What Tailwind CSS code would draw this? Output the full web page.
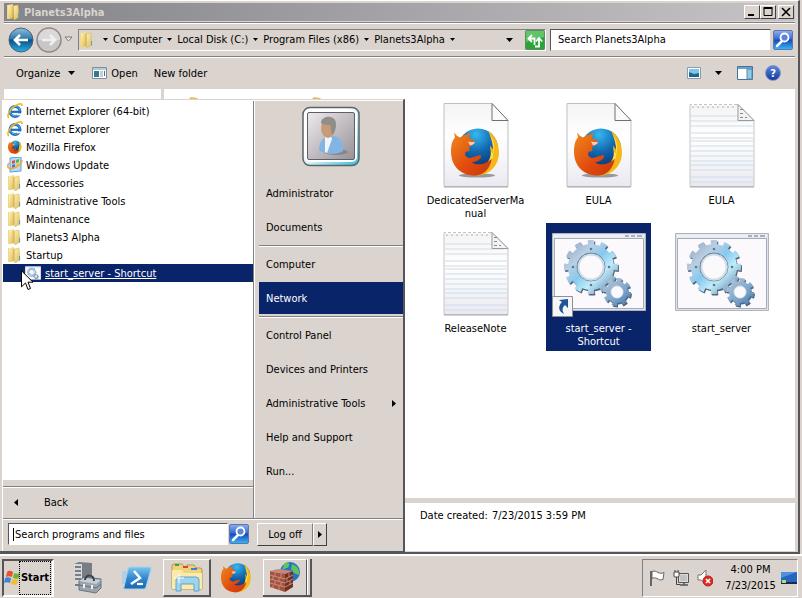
<!DOCTYPE html>
<html lang="en">
<head>
    <meta charset="UTF-8">
    <meta name="viewport" content="width=device-width, initial-scale=1.0">
    <title>Planets3Alpha</title>
    <script src="https://cdn.jsdelivr.net/npm/@tailwindcss/browser@4"></script>
</head>
<body class="relative flex flex-col h-screen overflow-hidden bg-[#dad3ce] text-black text-[11px] leading-[13px] font-['DejaVu_Sans_Condensed','Noto_Sans',sans-serif]">

    <!-- Shared icons -->
    <svg class="absolute w-0 h-0" aria-hidden="true">
        <defs>
            <linearGradient id="g-folder" x1="0" x2="1" y2="1"><stop offset="0" stop-color="#fff3b8"/><stop offset="1" stop-color="#dfb94e"/></linearGradient>
            <linearGradient id="g-fox" x1="0" x2="1" y2="1"><stop offset="0" stop-color="#f08a1c"/><stop offset="0.6" stop-color="#e0480e"/><stop offset="1" stop-color="#c8380c"/></linearGradient>
            <radialGradient id="g-globe" cx="0.45" cy="0.15" r="0.9"><stop offset="0" stop-color="#35b8f0"/><stop offset="0.5" stop-color="#1165ac"/><stop offset="1" stop-color="#0a2f6a"/></radialGradient>
            <linearGradient id="g-paper" x1="0" x2="0" y2="1"><stop offset="0" stop-color="#f4f4f4"/><stop offset="0.4" stop-color="#ffffff"/><stop offset="1" stop-color="#ebe9f0"/></linearGradient>
            <linearGradient id="g-gear" gradientUnits="userSpaceOnUse" x1="14" y1="10" x2="60" y2="58"><stop offset="0" stop-color="#8fa5bd"/><stop offset="0.3" stop-color="#b9cfe4"/><stop offset="0.5" stop-color="#86c9ee"/><stop offset="0.7" stop-color="#c0ecfa"/><stop offset="1" stop-color="#6689ab"/></linearGradient>
            <linearGradient id="g-gear2" gradientUnits="userSpaceOnUse" x1="54" y1="46" x2="76" y2="72"><stop offset="0" stop-color="#b5c4d6"/><stop offset="0.6" stop-color="#7ba6cc"/><stop offset="1" stop-color="#4a78ab"/></linearGradient>
            <linearGradient id="g-search" x1="0" x2="0" y2="1"><stop offset="0" stop-color="#8eb0ee"/><stop offset="0.45" stop-color="#3568d0"/><stop offset="0.5" stop-color="#1748bd"/><stop offset="1" stop-color="#3bb8f4"/></linearGradient>
        </defs>
        <symbol id="folder" viewBox="0 0 16 16">
            <path d="M1 1h6v13l-6 1z" fill="#efd888"/>
            <path d="M2 1l5-1v14l-5 1z" fill="url(#g-folder)"/>
            <path d="M7 2l5-1 1 12-5 3z" fill="url(#g-folder)" stroke="#d8b75a" stroke-width=".5"/>
            <path d="M7 2v13" stroke="#c9a548" stroke-width=".7"/>
            <path d="M12 9h1v4l-1 1z" fill="#4ba7d8"/>
        </symbol>
        <symbol id="ie" viewBox="0 0 16 16">
            <circle cx="8" cy="8.5" r="5" fill="none" stroke="#1b72c4" stroke-width="3"/>
            <circle cx="8" cy="8" r="5" fill="none" stroke="#4cb4ee" stroke-width="1"/>
            <path d="M4 8.800h10" stroke="#1c6fc0" stroke-width="2.200"/>
            <path d="M10 10.500h5.500v1.800H10z" fill="#fff"/>
            <path d="M2 15C-1 13 3 6 8 3s7-3 7 0" fill="none" stroke="#eeb41f" stroke-width="1.500"/>
        </symbol>
        <symbol id="firefox" viewBox="0 0 50 50">
            <circle cx="27" cy="22" r="20" fill="url(#g-globe)"/>
            <path d="M37 4c7 5 11 13 11 22 0 14-11 23-22 23l-4-5c10 1 18-5 18-15 0-4-1-7-1-10l3 4c0-7-2-12-5-19z" fill="#f6b71a"/>
            <path d="M39 8c5 8 5 15 3 20 0 10-8 15-14 15 8-5 12-10 12-18l2 2c1-7-1-13-3-19z" fill="#fde34b"/>
            <path d="M3 6c2 2 3 4 6 5 3-2 5-3 8-3l1-3c1 2 1 4 0 6 2 3 5 2 6 4 0 3-5 4-6 6 1 2 0 3 0 4-2-1-4 0-4 3 1 3 4 4 7 3 4-1 7-3 9-2 1 3-4 6-9 7 6 4 15 1 20-4-2 11-9 17-17 17C9 49 0 39 0 25 0 17 2 13 4 11z" fill="url(#g-fox)"/>
            <path d="M17 15c3 1 6 0 7 1-1 2-4 3-5 3z" fill="#f7cfae"/>
        </symbol>
        <symbol id="note" viewBox="0 0 66 86">
            <path d="M1 2h48l16 16v66H1z" fill="url(#g-paper)" stroke="#c5c5cb"/>
            <path d="M1 84.500h64" stroke="#a9a9b0"/>
            <path d="M3 2.500h45" stroke="#fff" stroke-width="3" stroke-dasharray="2 3"/>
            <path d="M3 4.500h45" stroke="#aaa" stroke-dasharray="2 3"/>
            <path d="M2 13.500h48M2 18.500h60M2 23.500h62M2 30.500h62M2 35.500h62M2 38.500h62M2 43.500h62M2 48.500h62M2 53.500h62M2 58.500h62M2 62.500h62M2 67.500h62M2 74.500h62M2 79.500h62" stroke="#cddde9"/>
            <path d="M49 2l16 16H49z" fill="#f3f3f3" stroke="#9a9a9e"/>
            <path d="M51 7h3M51 11h3M51 15h3M56 15h2" stroke="#888"/>
        </symbol>
        <symbol id="foxdoc" viewBox="0 0 66 86">
            <path d="M1 1h48l16 17v66H1z" fill="url(#g-paper)" stroke="#bfbfc4"/>
            <path d="M1 84.500h64" stroke="#aaa"/>
            <path d="M49 1l16 17H49z" fill="#fafafa" stroke="#707074"/>
            <ellipse cx="34" cy="73" rx="18" ry="2" fill="#999"/>
            <use href="#firefox" x="8" y="24" width="50" height="50"/>
        </symbol>
        <symbol id="gears" viewBox="0 0 94 78">
            <path d="M.5.500h93v77H.5z" fill="#dfe3ea" stroke="#aeb3bc"/>
            <path d="M2.500 5.500h89v70h-89z" fill="#fbf9fc" stroke="#a6acbc"/>
            <path d="M2 1.500h90v3H2z" fill="#eef0f4"/>
            <path d="M73 3h4M79 3h4M85 3h5" stroke="#aab2c0" stroke-width="2"/>
            <g fill="none" transform="translate(1 1.500)" stroke="#52677e">
                <circle cx="39" cy="34" r="18.500" stroke-width="9"/>
                <circle cx="39" cy="34" r="24" stroke-width="6" pathLength="24" stroke-dasharray="1 1" stroke-dashoffset=".5"/>
                <circle cx="65" cy="59" r="8.500" stroke-width="5"/>
                <circle cx="65" cy="59" r="12" stroke-width="4" pathLength="16" stroke-dasharray="1 1"/>
            </g>
            <g fill="none" stroke="url(#g-gear)">
                <circle cx="39" cy="34" r="18.500" stroke-width="9"/>
                <circle cx="39" cy="34" r="24" stroke-width="6" pathLength="24" stroke-dasharray="1 1" stroke-dashoffset=".5"/>
            </g>
            <circle cx="39" cy="34" r="14" fill="none" stroke="#71889f"/>
            <circle cx="39" cy="34" r="12.500" fill="#fbf9fc" stroke="#cfdbe6" stroke-width="2"/>
            <g fill="#5d7893"><circle cx="39" cy="16" r="1.300"/><circle cx="39" cy="52" r="1.300"/><circle cx="21" cy="34" r="1.300"/><circle cx="57" cy="34" r="1.300"/></g>
            <g fill="none" stroke="url(#g-gear2)">
                <circle cx="65" cy="59" r="8.500" stroke-width="5"/>
                <circle cx="65" cy="59" r="12" stroke-width="4" pathLength="16" stroke-dasharray="1 1"/>
            </g>
            <circle cx="65" cy="59" r="6" fill="#fbf9fc" stroke="#dce6ef"/>
        </symbol>
        <symbol id="search" viewBox="0 0 20 20">
            <rect x=".5" y=".5" width="19" height="19" rx="1.500" fill="url(#g-search)" stroke="#5a78ac"/>
            <path d="M9 11l-5 5" stroke="#fff" stroke-width="2.500" stroke-linecap="round"/>
            <circle cx="11.500" cy="7.500" r="4" fill="#5c86dd" stroke="#fff" stroke-width="1.800"/>
        </symbol>
        <symbol id="down" viewBox="0 0 7 4"><path d="M0 0h7L3.500 4z"/></symbol>
    </svg>

    <!-- Explorer window -->
    <main class="flex-1 min-h-0 flex flex-col pt-[2px] pl-1 pr-[3px] mr-[2px] border-t border-t-white border-r-2 border-r-[#55555a] border-b-2 border-b-[#55555a]">
        <header class="h-[18px] shrink-0 flex items-center pl-[2px] pr-px bg-linear-to-r from-[#858488] to-[#c6c4c7]">
            <svg class="size-4"><use href="#folder"/></svg>
            <h1 class="ml-[2px] flex-1 font-bold text-[#dad3ce]">Planets3Alpha</h1>
            <button aria-label="Minimize" class="w-4 h-[14px] bg-[#dad3ce] border border-t-white border-l-white border-r-[#404040] border-b-[#404040] flex justify-center">
                <svg class="w-3 h-3" viewBox="0 0 12 12"><path d="M2 8h6v2H2z"/></svg>
            </button>
            <button aria-label="Maximize" class="w-4 h-[14px] bg-[#dad3ce] border border-t-white border-l-white border-r-[#404040] border-b-[#404040] flex justify-center">
                <svg class="w-3 h-3" viewBox="0 0 12 12"><path d="M2 2.500h8v7H2z" fill="none" stroke="#000"/><path d="M1.500 1h9v2h-9z"/></svg>
            </button>
            <button aria-label="Close" class="ml-[2px] w-4 h-[14px] bg-[#dad3ce] border border-t-white border-l-white border-r-[#404040] border-b-[#404040] flex justify-center">
                <svg class="w-3 h-3" viewBox="0 0 12 12"><path d="M2 2l8 8M10 2l-8 8" stroke="#000" stroke-width="1.600"/></svg>
            </button>
        </header>

        <!-- Address bar -->
        <nav class="h-[35px] mt-[1px] shrink-0 flex items-center gap-1 pl-1 border-t border-t-[#808080] border-b border-b-[#808080] shadow-[inset_0_1px_0_#fff,0_1px_0_#fff]">
            <div class="w-[66px] flex items-center">
                <button aria-label="Back"><svg class="size-[26px]" viewBox="0 0 26 26">
                    <defs><linearGradient id="g-back" x1="0" x2="0" y2="1"><stop offset="0" stop-color="#91bdd9"/><stop offset=".45" stop-color="#2e79ac"/><stop offset=".5" stop-color="#0c4f85"/><stop offset="1" stop-color="#29b0e8"/></linearGradient></defs>
                    <circle cx="13" cy="13" r="12" fill="url(#g-back)" stroke="#47637c"/>
                    <path d="M7 13h13M12 8l-5 5 5 5" stroke="#fff" stroke-width="2.600" fill="none"/>
                </svg></button>
                <button aria-label="Forward" class="ml-[2px]"><svg class="size-[26px]" viewBox="0 0 26 26">
                    <circle cx="13" cy="13" r="12" fill="#c9c6c6" stroke="#8c8a8c" stroke-width="1.500"/>
                    <path d="M2 13a11 11 0 0 1 22 0z" fill="#dad8d8"/>
                    <path d="M6 13h13M14 8l5 5-5 5" stroke="#f1efef" stroke-width="2.600" fill="none"/>
                </svg></button>
                <button aria-label="Recent pages" class="ml-[2px]"><svg class="w-[9px] h-[7px]" viewBox="0 0 9 7"><path d="M1 1h7L4.500 5z" fill="#eee" stroke="#777"/></svg></button>
            </div>
            <div class="flex-1 h-[22px] flex items-center border border-t-[#808080] border-l-[#808080] border-r-white border-b-white">
                <svg class="size-4 shrink-0"><use href="#folder"/></svg>
                <svg class="w-[5px] h-[3px] ml-2 mr-[5px]"><use href="#down"/></svg>
                <a href="#" class="whitespace-nowrap">Computer</a>
                <svg class="w-[5px] h-[3px] mx-[5px]"><use href="#down"/></svg>
                <a href="#" class="whitespace-nowrap">Local Disk (C:)</a>
                <svg class="w-[5px] h-[3px] mx-[5px]"><use href="#down"/></svg>
                <a href="#" class="whitespace-nowrap">Program Files (x86)</a>
                <svg class="w-[5px] h-[3px] mx-[5px]"><use href="#down"/></svg>
                <a href="#" class="whitespace-nowrap">Planets3Alpha</a>
                <svg class="w-[5px] h-[3px] mx-[5px]"><use href="#down"/></svg>
                <button aria-label="Previous locations" class="ml-auto mr-3"><svg class="w-[7px] h-1"><use href="#down"/></svg></button>
                <button aria-label="Refresh"><svg class="size-5" viewBox="0 0 20 20">
                    <rect x=".5" y=".5" width="19" height="19" rx="1" fill="#2ba336" stroke="#5b8d62"/>
                    <path d="M1 1h18v6L1 12z" fill="#61c467"/>
                    <path d="M9.500 15V8.500H4M7 5L3.500 8.500 7 12" fill="none" stroke="#fff" stroke-width="1.800"/>
                    <path d="M10 16.500h4V9M10.800 11.500L14 8l3.200 3.500" fill="none" stroke="#fff" stroke-width="1.800"/>
                </svg></button>
            </div>
            <div class="flex items-center gap-[2px] pr-[2px]">
                <input type="text" aria-label="Search Planets3Alpha" value="Search Planets3Alpha" class="w-[221px] h-[22px] px-[7px] bg-white outline-none border border-t-[#55555a] border-l-[#55555a] border-r-[#dad3ce] border-b-[#dad3ce]">
                <button aria-label="Search"><svg class="size-5"><use href="#search"/></svg></button>
            </div>
        </nav>

        <!-- Command bar -->
        <div class="h-8 shrink-0 flex items-center pl-3 pr-[14px]">
            <button class="flex items-center gap-2">Organize <svg class="w-[7px] h-1"><use href="#down"/></svg></button>
            <button class="ml-[17px] flex items-center gap-1">
                <svg class="w-[15px] h-3" viewBox="0 0 15 12"><path d="M.5.500h14v11H.5z" fill="#fff" stroke="#7d8ea5"/><path d="M1 1h13v2H1z" fill="#b8c7da"/><path d="M2 4h5v6H2z" fill="#2f7d8c"/><path d="M8 5h3M8 7h3M8 9h3" stroke="#999"/><path d="M12 4h1v5h-1z" fill="#3f6fb4"/></svg>
                Open
            </button>
            <button class="ml-4">New folder</button>
            <button aria-label="Change your view" class="ml-auto flex items-center gap-[14px]">
                <svg class="w-[14px] h-3" viewBox="0 0 14 12"><path d="M.5.500h13v11H.5z" fill="#fff" stroke="#8a9bb5"/><path d="M2 2h10v8H2z" fill="#7cc4ee"/><path d="M2 5l5 2 5-1v4H2z" fill="#1f6f78"/><path d="M2 8l10 1v1H2z" fill="#2458a4"/></svg>
                <svg class="w-[7px] h-1"><use href="#down"/></svg>
            </button>
            <button aria-label="Show the preview pane" class="ml-[15px]"><svg class="w-4 h-[14px]" viewBox="0 0 16 14"><path d="M.5.500h15v13H.5z" fill="#fff" stroke="#45719d"/><path d="M1 1h14v2H1z" fill="#6da1cc"/><path d="M10 3h5v10h-5z" fill="#8fcbe8" stroke="#5a87b0"/></svg></button>
            <button aria-label="Help" class="ml-3 size-4 rounded-full bg-linear-to-b from-[#5c86d8] to-[#1638a0] border border-[#8295c4] text-white font-bold flex items-center justify-center">?</button>
        </div>

        <div class="flex-1 min-h-0 flex flex-col gap-[5px] mb-px">
            <div class="flex-1 min-h-0 flex gap-[3px]">
                <aside class="w-[157px] bg-white"></aside>
                <section class="flex-1 bg-white pt-[6px] pl-[13px] grid grid-cols-[repeat(auto-fill,105px)] auto-rows-[128px] gap-x-[18px] content-start text-center">
                    <svg class="w-full h-24" viewBox="0 0 105 96"><path d="M12 4l2-2 6 1 2 2v80l-10 8z" fill="#e9bb55"/></svg>
                    <svg class="w-full h-24" viewBox="0 0 105 96"><path d="M12 4l2-2 6 1 2 2v80l-10 8z" fill="#e9bb55"/></svg>
                    <div class="flex flex-col items-center pt-[7px] gap-[5px]">
                        <svg class="w-[66px] h-[87px]"><use href="#foxdoc"/></svg>
                        <span>DedicatedServerMa<br>nual</span>
                    </div>
                    <div class="flex flex-col items-center pt-[7px] gap-[5px]">
                        <svg class="w-[66px] h-[87px]"><use href="#foxdoc"/></svg>
                        <span>EULA</span>
                    </div>
                    <div class="flex flex-col items-center pt-[7px] gap-[5px]">
                        <svg class="w-[66px] h-[87px]"><use href="#note"/></svg>
                        <span>EULA</span>
                    </div>
                    <div class="col-start-3 flex flex-col items-center pt-[7px] gap-[5px]">
                        <svg class="w-[66px] h-[87px]"><use href="#note"/></svg>
                        <span>ReleaseNote</span>
                    </div>
                    <div class="flex flex-col items-center pt-[7px] gap-[5px] bg-[#0a246a] text-white">
                        <div class="relative h-[87px] pt-[3px]">
                            <svg class="w-[94px] h-[78px]"><use href="#gears"/></svg>
                            <svg class="absolute left-0 bottom-0 size-[21px]" viewBox="0 0 21 21"><path d="M.5.500h20v20H.5z" fill="#f5f5f8" stroke="#8d909b"/><path d="M7 4l9-1v9l-3-3c-3 3-3 5-1 9-6-3-6-8-2-12z" fill="#1f5496"/></svg>
                        </div>
                        <span>start_server -<br>Shortcut</span>
                    </div>
                    <div class="flex flex-col items-center pt-[7px] gap-[5px]">
                        <div class="h-[87px] pt-[3px]"><svg class="w-[94px] h-[78px]"><use href="#gears"/></svg></div>
                        <span>start_server</span>
                    </div>
                </section>
            </div>
            <footer class="h-12 shrink-0 bg-white pl-[416px] pt-[6px]">Date created: <span class="ml-px">7/23/2015 3:59 PM</span></footer>
        </div>
    </main>

    <!-- Start menu -->
    <div class="absolute left-0 bottom-[45px] w-[405px] bg-[#dad3ce] border-t border-t-[#dad3ce] border-r-2 border-r-[#55555a] border-b-2 border-b-[#55555a]">
        <div class="ml-[2px] border-t border-l border-white">
            <div class="flex border-b border-[#808080]">
                <div class="w-[251px] flex flex-col border-r border-[#808080]">
                    <ul class="flex-1 bg-white pt-px">
                        <li class="h-[18px] flex items-center pl-1 gap-[3px]"><svg class="size-4"><use href="#ie"/></svg><a href="#">Internet Explorer (64-bit)</a></li>
                        <li class="h-[18px] flex items-center pl-1 gap-[3px]"><svg class="size-4"><use href="#ie"/></svg><a href="#">Internet Explorer</a></li>
                        <li class="h-[18px] flex items-center pl-1 gap-[3px]"><svg class="w-4 h-[14px]"><use href="#firefox"/></svg><a href="#">Mozilla Firefox</a></li>
                        <li class="h-[18px] flex items-center pl-1 gap-[3px]"><svg class="size-4" viewBox="0 0 16 16"><path d="M3 1l11-1v14l-11 1z" fill="#b7dcf2" stroke="#5f9fd0"/><path d="M5 4l3-1v3l-3 1z" fill="#e8502e"/><path d="M9 3l3-1v3l-3 1z" fill="#55b948"/><path d="M5 8l3-1v3l-3 1z" fill="#2f7fd6"/><path d="M9 7l3-1v3l-3 1z" fill="#f4c430"/><path d="M2 6c-3 4 0 7 5 5s8-5 8-8" fill="none" stroke="#f0a63c" stroke-width="1.500"/></svg><a href="#">Windows Update</a></li>
                        <li class="h-[18px] flex items-center pl-1 gap-[3px]"><svg class="size-4"><use href="#folder"/></svg><a href="#">Accessories</a></li>
                        <li class="h-[18px] flex items-center pl-1 gap-[3px]"><svg class="size-4"><use href="#folder"/></svg><a href="#">Administrative Tools</a></li>
                        <li class="h-[18px] flex items-center pl-1 gap-[3px]"><svg class="size-4"><use href="#folder"/></svg><a href="#">Maintenance</a></li>
                        <li class="h-[18px] flex items-center pl-1 gap-[3px]"><svg class="size-4"><use href="#folder"/></svg><a href="#">Planets3 Alpha</a></li>
                        <li class="h-[18px] flex items-center pl-1 gap-[3px]"><svg class="size-4"><use href="#folder"/></svg><a href="#">Startup</a></li>
                        <li class="relative h-[18px] flex items-center pl-[22px] gap-1 bg-[#0a246a] text-white">
                            <svg class="w-4 h-[14px]"><use href="#gears"/></svg><a href="#" class="underline">start_server - Shortcut</a>
                            <!-- Mouse pointer -->
                            <svg class="absolute left-[18px] top-[6px] w-3 h-[21px]" viewBox="0 0 12 21"><path d="M.5.800v16l4-3.800 2.500 6.500 2.500-1L7 12.200h5z" fill="#fff" stroke="#000"/></svg>
                        </li>
                    </ul>
                    <div class="h-[38px] pt-[6px]">
                        <button class="w-full h-8 flex items-center pl-[11px] gap-[26px] border-t border-[#808080] shadow-[inset_0_1px_0_#fff]">
                            <svg class="w-1 h-[7px]" viewBox="0 0 4 7"><path d="M4 0v7L0 3.500z"/></svg>
                            Back
                        </button>
                    </div>
                </div>
                <div class="flex-1 flex flex-col pl-1 pb-[30px] border-l border-white">
                    <svg class="ml-[42px] mt-[5px] mb-2 w-[60px] h-[62px]" viewBox="0 0 60 62">
                        <defs>
                            <linearGradient id="g-frame" x1="0" x2="1" y2="1"><stop offset=".4" stop-color="#fff"/><stop offset="1" stop-color="#35bcd6"/></linearGradient>
                            <linearGradient id="g-pic" x1="0" x2="1" y2="1"><stop offset="0" stop-color="#eeeaee"/><stop offset="1" stop-color="#969196"/></linearGradient>
                        </defs>
                        <rect x="2" y="1.500" width="56" height="58" rx="7" fill="url(#g-frame)" stroke="#5b6569" stroke-width="1.500"/>
                        <rect x="4" y="4" width="52" height="52" rx="5" fill="#fff"/>
                        <rect x="6.500" y="6.500" width="47" height="47" rx="1.500" fill="url(#g-pic)" stroke="#5f5f66"/>
                        <ellipse cx="35" cy="46" rx="12" ry="3" fill="#88848a"/>
                        <path d="M18 44c0-7 3-12 9-14h6c6 1 10 6 9 15-5 4-19 4-24-1z" fill="#82b5e6"/>
                        <path d="M24 31l6-1 1 3-5 14-2-1z" fill="#f2f5fa"/>
                        <ellipse cx="27" cy="22" rx="7" ry="10" fill="#c89b78"/>
                        <path d="M20 17c0-8 15-9 15 1 0 5-1 8-4 11-1-4-1-7-2-10-3 0-6 0-9-2z" fill="#918d89"/>
                    </svg>
                    <a href="#" class="h-[34px] flex items-center pl-[7px]">Administrator</a>
                    <a href="#" class="h-[34px] flex items-center pl-[7px]">Documents</a>
                    <hr class="mt-px h-[2px] border-t-[#808080] border-b border-b-white">
                    <a href="#" class="h-[34px] flex items-center pl-[7px]">Computer</a>
                    <a href="#" class="mt-px h-8 flex items-center pl-[7px] bg-[#0a246a] text-white">Network</a>
                    <hr class="mt-[2px] h-[2px] border-t-[#808080] border-b border-b-white">
                    <a href="#" class="h-[34px] flex items-center pl-[7px]">Control Panel</a>
                    <a href="#" class="h-[34px] flex items-center pl-[7px]">Devices and Printers</a>
                    <a href="#" class="h-[34px] flex items-center justify-between px-[7px]">Administrative Tools <svg class="w-1 h-[7px]" viewBox="0 0 4 7"><path d="M0 0v7l4-3.500z"/></svg></a>
                    <a href="#" class="h-[34px] flex items-center pl-[7px]">Help and Support</a>
                    <a href="#" class="h-[34px] flex items-center pl-[7px]">Run...</a>
                </div>
            </div>
            <div class="h-8 flex items-center pl-[5px] pb-[3px] border-t border-white">
                <label class="w-[220px] h-[22px] flex items-center pl-1 bg-white border border-t-[#55555a] border-l-[#55555a] border-r-white border-b-white">
                    <span class="w-px h-[13px] bg-black"></span>
                    <input type="text" aria-label="Search programs and files" value="Search programs and files" class="flex-1 min-w-0 pl-px outline-none">
                </label>
                <button aria-label="Search" class="ml-px"><svg class="size-5"><use href="#search"/></svg></button>
                <button class="ml-2 w-14 h-[23px] border border-t-white border-l-white border-r-[#808080] border-b-[#404040]">Log off</button>
                <button aria-label="More options" class="w-[14px] h-[23px] flex items-center justify-center border border-t-white border-l-white border-r-[#404040] border-b-[#404040]"><svg class="w-1 h-[7px]" viewBox="0 0 4 7"><path d="M0 0v7l4-3.500z"/></svg></button>
            </div>
        </div>
    </div>

    <!-- Taskbar -->
    <footer class="h-11 shrink-0 flex items-center pl-[2px] pr-1 pt-px border-t-2 border-t-white">
        <button class="w-[52px] h-[38px] flex items-center pr-[2px] font-bold border-2 border-t-[#55555a] border-l-[#55555a] border-r-white border-b-white">
            <svg class="w-4 h-4 shrink-0" viewBox="0 0 16 16"><path d="M3 2c2-2 4-1 6 0L8 7C6 6 4 6 2 7z" fill="#e8502e"/><path d="M10 3c2 1 4 1 6 0l-1 5c-2 1-4 1-6 0z" fill="#6fb63c"/><path d="M1 8c2-1 4-1 6 0l-1 5c-2-1-4-1-6 0z" fill="#3c87dc"/><path d="M8 9c2 1 4 1 6 0l-1 5c-2 1-4 1-6 0z" fill="#f5bd2a"/></svg>
            <span class="h-8 flex-1 flex items-center justify-center outline outline-dotted outline-black">Start</span>
        </button>
        <button aria-label="Server Manager" class="ml-[17px] w-8 h-[34px]"><svg class="w-8 h-[34px]" viewBox="0 0 32 34">
            <path d="M3 3l5-2 13 1v25H3z" fill="#777d82"/><path d="M3 3h8v26l-8-2z" fill="#d5d9dc"/><path d="M4 6h6M4 10h6M4 14h6M4 18h6M4 24h6" stroke="#595f65" stroke-width="1.500"/>
            <path d="M8 20l5-4 17 2v9l-5 5-17-3z" fill="#9aa5ad" stroke="#69727a"/><path d="M8 20l17 3 5-4-17-2z" fill="#c6ced4"/><path d="M14 19c0-6 9-6 9 1" fill="none" stroke="#3c4348" stroke-width="2"/><path d="M8 24l17 3 5-4" fill="none" stroke="#646d75"/><path d="M13 23v4M21 24v4" stroke="#eef1f3" stroke-width="2"/>
        </svg></button>
        <button aria-label="Windows PowerShell" class="ml-[19px] w-[30px] h-6"><svg class="w-[30px] h-6" viewBox="0 0 30 24">
            <defs><linearGradient id="g-ps" x1="0" x2="0" y2="1"><stop offset="0" stop-color="#7cc5ee"/><stop offset=".5" stop-color="#3288cf"/><stop offset="1" stop-color="#1c67b2"/></linearGradient></defs>
            <path d="M0 5h6L3 18H0z" fill="#b0cfe0"/><path d="M8 1h20q1.500 0 1 2l-5 18q-.500 2-2 2H3q-2 0-1-2L6 3q0-2 2-2z" fill="url(#g-ps)" stroke="#a5d3ee"/>
            <path d="M12 5l6 7-9 6" fill="none" stroke="#fff" stroke-width="2.500"/><path d="M15 18h6" stroke="#fff" stroke-width="2.200"/>
        </svg></button>
        <button aria-label="Windows Explorer" class="ml-[11px] w-12 h-[38px] flex items-center justify-center border border-t-white border-l-white border-b-2 border-r-2 border-r-[#55555a] border-b-[#55555a]"><svg class="w-8 h-[30px]" viewBox="0 0 32 30">
            <path d="M1 4q0-2 2-2h8l2 3h3V3h7l2 3h4q2 0 2 2v19H1z" fill="#f0d27c" stroke="#b99643"/><path d="M4 2h4v2H4z" fill="#2ca845"/><path d="M12 4h5v2h-5z" fill="#dd4536"/><path d="M20 6h6v2h-6z" fill="#3485da"/><path d="M1 8h10l2 3h18v16H1z" fill="#fbebaa"/>
            <path d="M5 29V18q0-3 3-3h17q3 0 3 3v11h-5v-7H10v7z" fill="#9fd3ee" stroke="#5da5ce"/><path d="M8 11v10M3 16h10" stroke="#fff"/>
        </svg></button>
        <button aria-label="Mozilla Firefox" class="ml-[10px]"><svg class="size-[31px]"><use href="#firefox"/></svg></button>
        <div class="ml-[11px] h-[38px] flex border-r-2 border-b-2 border-[#55555a]">
            <button aria-label="Windows Firewall" class="w-[44px] flex items-center justify-center border border-t-white border-l-white border-r-[#55555a] border-b-0"><svg class="w-8 h-8" viewBox="0 0 32 32">
                <circle cx="21" cy="11" r="10" fill="#2374c8"/><path d="M15 3c4-3 6-1 5 2s-6 2-7 5zM23 3c6 2 8 7 7 11l-5-2-3-4z" fill="#5fc25c"/>
                <path d="M1 10l15 3v18L1 26z" fill="#a4513f"/><path d="M16 13l8-3v16l-8 5z" fill="#733023"/><path d="M1 10l8-2 15 2-8 3z" fill="#c98575"/>
                <path d="M1 14l15 4 8-4M1 18l15 4 8-4M1 22l15 4 8-4M6 11v4M12 12v5M4 15v4M10 17v4M6 20v4M12 21v4M4 24v3M10 25v4M20 12v4M18 17v4M21 20v4" stroke="#cf9a8c" stroke-width=".8" fill="none"/>
            </svg></button>
            <span class="w-[3px] border-l border-white"></span>
        </div>
        <div class="ml-auto h-[38px] flex items-center pl-[6px] border border-t-[#808080] border-l-[#808080] border-r-white border-b-white">
            <svg class="w-4 h-[18px]" viewBox="0 0 16 18"><path d="M2 2v15" stroke="#666" stroke-width="2"/><path d="M3 2.500c3-1 4 0 6 1s4 1 6 0l-1 7c-3 1-4 0-6-1s-3-1-5 0z" fill="#fff" stroke="#666"/></svg>
            <svg class="ml-2 w-4 h-[18px]" viewBox="0 0 16 18"><path d="M5.500 4.500h10v9h-10z" fill="#dcdcdc" stroke="#555"/><path d="M7 6h7v6H7z" fill="#c2c2c2"/><path d="M7 16h8M11 13v3" stroke="#555" stroke-width="1.500"/><path d="M1 3h5v4q0 1-1 1H2q-1 0-1-1zM2 3V1M5 3V1" fill="#fff" stroke="#444"/><path d="M3.500 8v7.500H7" fill="none" stroke="#444"/></svg>
            <svg class="ml-2 w-4 h-[18px]" viewBox="0 0 16 18"><path d="M1 6h3l5-5v14l-5-4H1z" fill="#fff" stroke="#777"/><circle cx="11" cy="12" r="5" fill="#dc2d25" stroke="#b3221b"/><path d="M9 10l4 4M13 10l-4 4" stroke="#fff" stroke-width="1.600"/></svg>
            <time class="ml-[11px] w-[53px] text-center leading-4 whitespace-nowrap">4:00 PM<br>7/23/2015</time>
            <button aria-label="Show desktop" class="ml-1"><svg class="w-4 h-3" viewBox="0 0 16 12"><path d="M0 0h16v10H0z" fill="#2766bd"/><path d="M0 0h16L0 6z" fill="#4f91dc"/><path d="M0 10h16v2H0z" fill="#1a2a4a"/><path d="M1 8h4v3H1z" fill="#aee06b"/></svg></button>
        </div>
    </footer>
</body>
</html>
